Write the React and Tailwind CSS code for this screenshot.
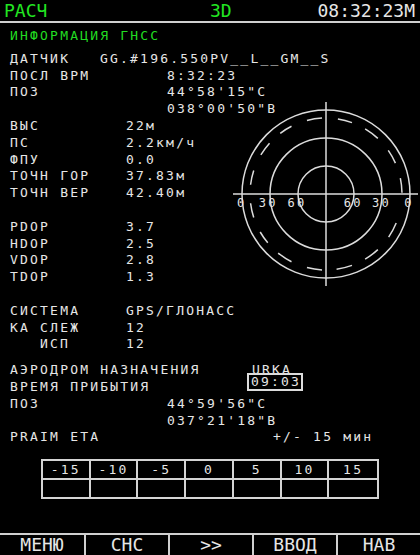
import React from 'react';

const CX = 93;
const CY = 93;

// сегменты пунктирного кольца, градусы против часовой от оси X
const DASHES = [
  [1, 12], [24, 35], [47, 59], [70, 81], [93, 104.5], [117, 127], [138, 149],
  [162, 173], [187, 198], [210, 220], [231, 243], [255.5, 267], [278, 290],
  [301, 313], [325.5, 337.5],
];

const SCALE = [
  { x: 8.7, t: '0' },
  { x: 35.3, t: '30' },
  { x: 64, t: '60' },
  { x: 120.3, t: '60' },
  { x: 148.5, t: '30' },
  { x: 176, t: '0' },
];

const ETA_COLS = ['-15', '-10', '-5', '0', '5', '10', '15'];
const SOFTKEYS = ['МЕНЮ', 'СНС', '>>', 'ВВОД', 'НАВ'];

function arc(r, a1, a2) {
  const p = (a) => {
    const t = (a * Math.PI) / 180;
    return `${(CX + r * Math.cos(t)).toFixed(2)} ${(CY - r * Math.sin(t)).toFixed(2)}`;
  };
  return `M${p(a1)} A${r} ${r} 0 0 0 ${p(a2)}`;
}

function SkyPlot() {
  return (
    <svg width="187" height="187" viewBox="0 0 187 187" className="shrink-0">
      <g fill="none" stroke="#dcdcdc" strokeWidth="1.5">
        <circle cx={CX} cy={CY} r="28" />
        <circle cx={CX} cy={CY} r="56" />
        <circle cx={CX} cy={CY} r="84" />
        {DASHES.map(([a, b], i) => (
          <path key={i} d={arc(76, a, b)} />
        ))}
        <line x1="0" y1={CY} x2="185" y2={CY} />
        <line x1={CX} y1="1" x2={CX} y2="185" />
      </g>
      {SCALE.map((s, i) => (
        <text
          key={i}
          x={s.x}
          y="106"
          fontSize="12"
          fill="#e6e6e6"
          textAnchor="middle"
          fontFamily="'DejaVu Sans Mono', monospace"
        >
          {s.t}
        </text>
      ))}
    </svg>
  );
}

function Row({ label, value, at = 'w-[116px]', indent = '' }) {
  return (
    <div className="flex h-[16.8px] leading-[16.8px] whitespace-pre">
      <span className={`${at} ${indent} shrink-0`}>{label}</span>
      <span>{value}</span>
    </div>
  );
}

function Blank() {
  return <div className="h-[16.8px]" />;
}

export default function App() {
  return (
    <div className="w-[420px] h-[555px] bg-black flex flex-col overflow-hidden text-[#e6e6e6] font-['DejaVu_Sans_Mono',monospace]">
      {/* верхняя строка */}
      <div className="flex h-[23px] items-center border-b-2 border-[#cfcfcf] text-[18px] leading-none shrink-0">
        <span className="w-[210px] pl-[4px] text-[#22e622]">РАСЧ</span>
        <span className="text-[#22e622]">3D</span>
        <span className="ml-auto pr-[5px]">08:32:23М</span>
      </div>

      <div className="pl-[10px] text-[13px] tracking-[2.2px]">
        <div className="mt-[5px] mb-[6px] h-[16.8px] leading-[16.8px] text-[#22dd22]">ИНФОРМАЦИЯ ГНСС</div>

        <Row label="ДАТЧИК" value="GG.#196.550PV__L__GM__S" at="w-[90px]" />
        <Row label="ПОСЛ ВРМ" value="8:32:23" at="w-[157px]" />
        <Row label="ПОЗ" value={'44°58\'15"С'} at="w-[157px]" />

        <div className="flex">
          <div className="w-[223px] shrink-0">
            <Row label="" value={'038°00\'50"В'} at="w-[157px]" />
            <Row label="ВЫС" value="22м" />
            <Row label="ПС" value="2.2км/ч" />
            <Row label="ФПУ" value="0.0" />
            <Row label="ТОЧН ГОР" value="37.83м" />
            <Row label="ТОЧН ВЕР" value="42.40м" />
            <Blank />
            <Row label="PDOP" value="3.7" />
            <Row label="HDOP" value="2.5" />
            <Row label="VDOP" value="2.8" />
            <Row label="TDOP" value="1.3" />
            <Blank />
            <Row label="СИСТЕМА" value="GPS/ГЛОНАСС" />
            <Row label="КА СЛЕЖ" value="12" />
            <Row label="ИСП" value="12" indent="pl-[30px]" />
          </div>
          <SkyPlot />
        </div>

        <div className="mt-[9px]">
          <Row label="АЭРОДРОМ НАЗНАЧЕНИЯ" value="URKA" at="w-[242px]" />
          <div className="flex h-[16.8px] leading-[16.8px] whitespace-pre">
            <span className="w-[237px] shrink-0">ВРЕМЯ ПРИБЫТИЯ</span>
            <span className="-mt-[6px] h-[18px] flex items-center border-2 border-[#dcdcdc] pl-[2px] pr-0 leading-[13px]">
              09:03
            </span>
          </div>
          <Row label="ПОЗ" value={'44°59\'56"С'} at="w-[157px]" />
          <Row label="" value={'037°21\'18"В'} at="w-[157px]" />
          <Row label="PRAIM ETA" value="+/- 15 мин" at="w-[263px]" />
        </div>

        <div className="mt-[13px] ml-[31px] w-[338px] border-2 border-[#d4d4d4] grid grid-cols-7">
          {ETA_COLS.map((c, i) => (
            <div
              key={c}
              className={`h-[19px] flex items-center justify-center border-b-2 border-[#d4d4d4] leading-none ${i < 6 ? 'border-r-2' : ''}`}
            >
              {c}
            </div>
          ))}
          {ETA_COLS.map((c, i) => (
            <div key={'e' + c} className={`h-[17px] border-[#d4d4d4] ${i < 6 ? 'border-r-2' : ''}`} />
          ))}
        </div>
      </div>

      {/* софт-клавиши */}
      <div className="mt-auto h-[22px] grid grid-cols-5 border-t-2 border-[#cfcfcf] text-[18px] leading-none shrink-0">
        {SOFTKEYS.map((k, i) => (
          <div
            key={k}
            className={`flex items-center justify-center border-[#cfcfcf] ${i > 0 ? 'border-l-2' : ''}`}
          >
            {k}
          </div>
        ))}
      </div>
    </div>
  );
}
